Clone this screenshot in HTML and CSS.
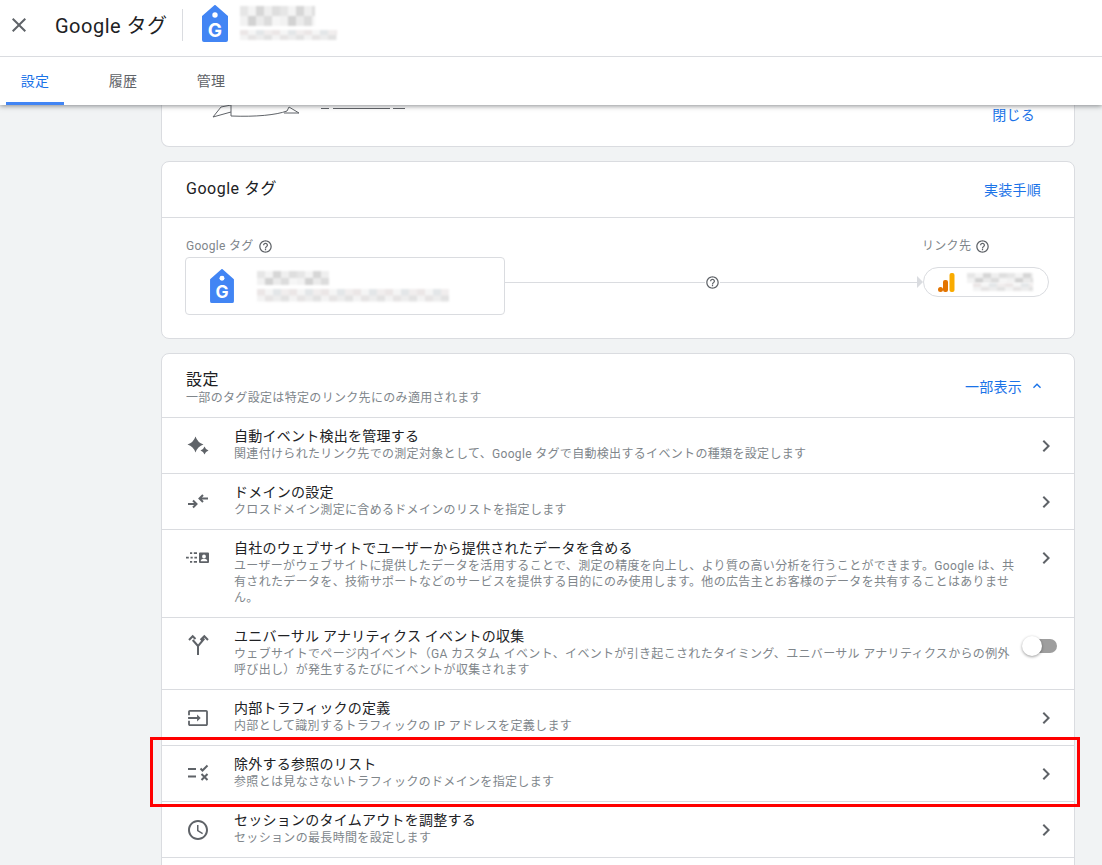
FILE: index.html
```html
<!DOCTYPE html>
<html lang="ja">
<head>
	<meta charset="UTF-8">
	<title>Google タグ</title>
	<link rel="stylesheet" href="styles.css">
</head>
<body>
	<header class="top">
		<div class="top_bar">
			<svg class="close_icon" viewBox="0 0 24 24" width="24" height="24"><path d="M19 6.410 17.590 5 12 10.590 6.410 5 5 6.410 10.590 12 5 17.590 6.410 19 12 13.410 17.590 19 19 17.590 13.410 12z"/></svg>
			<span class="top_title">Google タグ</span>
			<span class="top_divider"></span>
			<svg class="tag_icon top_tag" viewBox="0 0 26 37" width="26" height="37"><path d="M13 1 25 11.500V35a1 1 0 0 1-1 1H2a1 1 0 0 1-1-1V11.500z" fill="#4285f4" stroke="#4285f4" stroke-width="2" stroke-linejoin="round"/><circle cx="13" cy="10" r="2.700" fill="#fff"/><text x="13" y="32" class="tag_g" font-size="19">G</text></svg>
			<div class="blur_group top_group">
				<span class="blur blur_a top_blur1"></span>
				<span class="blur blur_b top_blur2"></span>
			</div>
		</div>
		<nav class="tabs">
			<a class="tab tab_on">設定</a>
			<a class="tab">履歴</a>
			<a class="tab">管理</a>
		</nav>
	</header>

	<main class="content">
		<section class="card card_cut">
			<svg class="sketch" viewBox="0 0 90 14" width="90" height="14"><path d="M1 13 9 3l10-2v11c25 1 45-1 56-5l2-4 10 6H72M19 8 1 13" fill="none" stroke="#5f6368"/></svg>
			<span class="sketch_line"></span>
			<a class="link close_link">閉じる</a>
		</section>

		<section class="card">
			<div class="card_head tag_head">
				<h2 class="card_title">Google タグ</h2>
				<a class="link">実装手順</a>
			</div>
			<div class="tag_body">
				<div class="tag_left">
					<div class="field_label">Google タグ <svg class="help" viewBox="0 0 24 24" width="15" height="15"><path d="M11 18h2v-2h-2v2zm1-16C6.480 2 2 6.480 2 12s4.480 10 10 10 10-4.480 10-10S17.520 2 12 2zm0 18c-4.410 0-8-3.590-8-8s3.590-8 8-8 8 3.590 8 8-3.590 8-8 8zm0-14c-2.210 0-4 1.790-4 4h2c0-1.100.9-2 2-2s2 .9 2 2c0 2-3 1.750-3 5h2c0-2.250 3-2.500 3-5 0-2.210-1.790-4-4-4z"/></svg></div>
					<div class="tag_box">
						<svg class="tag_icon" viewBox="0 0 26 37" width="24" height="34"><path d="M13 1 25 11.500V35a1 1 0 0 1-1 1H2a1 1 0 0 1-1-1V11.500z" fill="#4285f4" stroke="#4285f4" stroke-width="2" stroke-linejoin="round"/><circle cx="13" cy="10" r="2.700" fill="#fff"/><text x="13" y="32" class="tag_g" font-size="19">G</text></svg>
						<div class="blur_group box_blur">
							<span class="blur blur_a box_blur1"></span>
							<span class="blur blur_b box_blur2"></span>
						</div>
					</div>
				</div>
				<div class="connector">
					<span class="conn_line conn_first"></span>
					<svg class="help conn_help" viewBox="0 0 24 24" width="15" height="15"><path d="M11 18h2v-2h-2v2zm1-16C6.480 2 2 6.480 2 12s4.480 10 10 10 10-4.480 10-10S17.520 2 12 2zm0 18c-4.410 0-8-3.590-8-8s3.590-8 8-8 8 3.590 8 8-3.590 8-8 8zm0-14c-2.210 0-4 1.790-4 4h2c0-1.100.9-2 2-2s2 .9 2 2c0 2-3 1.750-3 5h2c0-2.250 3-2.500 3-5 0-2.210-1.790-4-4-4z"/></svg>
					<span class="conn_line"></span>
					<span class="conn_arrow"></span>
				</div>
				<div class="tag_right">
					<div class="field_label">リンク先 <svg class="help" viewBox="0 0 24 24" width="15" height="15"><path d="M11 18h2v-2h-2v2zm1-16C6.480 2 2 6.480 2 12s4.480 10 10 10 10-4.480 10-10S17.520 2 12 2zm0 18c-4.410 0-8-3.590-8-8s3.590-8 8-8 8 3.590 8 8-3.590 8-8 8zm0-14c-2.210 0-4 1.790-4 4h2c0-1.100.9-2 2-2s2 .9 2 2c0 2-3 1.750-3 5h2c0-2.250 3-2.500 3-5 0-2.210-1.790-4-4-4z"/></svg></div>
					<div class="dest_pill">
						<svg viewBox="0 0 17 19" width="17" height="19"><rect x="11.500" y="0" width="5" height="19" rx="2" fill="#f9ab00"/><rect x="5" y="7" width="5" height="12" rx="2" fill="#e37400"/><circle cx="2.500" cy="16.500" r="2.500" fill="#e37400"/></svg>
						<div class="blur_group pill_blur">
							<span class="blur blur_a pill_blur1"></span>
							<span class="blur blur_b pill_blur2"></span>
						</div>
					</div>
				</div>
			</div>
		</section>

		<section class="card">
			<div class="card_head set_head">
				<div class="set_text">
					<h2 class="card_title">設定</h2>
					<p class="row_sub">一部のタグ設定は特定のリンク先にのみ適用されます</p>
				</div>
				<a class="link less_link">一部表示 <svg viewBox="0 0 24 24" width="16" height="16"><path d="M12 8l-6 6 1.410 1.410L12 10.830l4.590 4.580L18 14z" fill="#1a73e8"/></svg></a>
			</div>

			<div class="row">
				<svg class="row_icon" viewBox="0 0 24 24"><path d="M9.500 2.500Q11.500 8.500 17.500 10.500 11.500 12.500 9.500 18.500 7.500 12.500 1.500 10.500 7.500 8.500 9.500 2.500zM18.500 12.500Q19.500 15.500 22.500 16.500 19.500 17.500 18.500 20.500 17.500 17.500 14.500 16.500 17.500 15.500 18.500 12.500z"/></svg>
				<div class="row_text">
					<h3 class="row_title">自動イベント検出を管理する</h3>
					<p class="row_sub">関連付けられたリンク先での測定対象として、Google タグで自動検出するイベントの種類を設定します</p>
				</div>
				<svg class="chevron" viewBox="0 0 24 24"><path d="M10 6 8.590 7.410 13.170 12l-4.580 4.590L10 18l6-6z"/></svg>
			</div>
			<div class="row">
				<svg class="row_icon line_icon" viewBox="0 0 24 24"><path d="M2 14h8.500M7 10.500l3.500 3.500-3.500 3.500M22 8.500h-8.500M17 5l-3.500 3.500L17 12"/></svg>
				<div class="row_text">
					<h3 class="row_title">ドメインの設定</h3>
					<p class="row_sub">クロスドメイン測定に含めるドメインのリストを指定します</p>
				</div>
				<svg class="chevron" viewBox="0 0 24 24"><path d="M10 6 8.590 7.410 13.170 12l-4.580 4.590L10 18l6-6z"/></svg>
			</div>
			<div class="row">
				<svg class="row_icon" viewBox="0 0 24 24"><path d="M4 6.300h2.200V8H4zM7.800 6.300H11V8H7.800zM0 10.700h2.800v1.700H0zM4.500 10.700h2.200v1.700H4.500zM8.400 10.700H11v1.700H8.400zM4 15h2.200v1.700H4zM7.800 15H11v1.700H7.800zM14 6.500h8a1 1 0 0 1 1 1v8.500a1 1 0 0 1-1 1h-8a1 1 0 0 1-1-1V7.500a1 1 0 0 1 1-1zm4 2a1.900 1.900 0 1 0 0 3.800 1.900 1.900 0 0 0 0-3.800zM14.800 15.200h6.400v-.8c0-1-2-1.600-3.200-1.600s-3.200.6-3.200 1.600z"/></svg>
				<div class="row_text">
					<h3 class="row_title">自社のウェブサイトでユーザーから提供されたデータを含める</h3>
					<p class="row_sub">ユーザーがウェブサイトに提供したデータを活用することで、測定の精度を向上し、より質の高い分析を行うことができます。Google は、共<br>有されたデータを、技術サポートなどのサービスを提供する目的にのみ使用します。他の広告主とお客様のデータを共有することはありませ<br>ん。</p>
				</div>
				<svg class="chevron" viewBox="0 0 24 24"><path d="M10 6 8.590 7.410 13.170 12l-4.580 4.590L10 18l6-6z"/></svg>
			</div>
			<div class="row">
				<svg class="row_icon line_icon" viewBox="0 0 24 24"><path d="M12 21v-9L18.300 4.500M14.500 6l3.800-3.800L22 6M12 12 6.700 6M3 6l3.700-3.800L9.500 5"/></svg>
				<div class="row_text">
					<h3 class="row_title">ユニバーサル アナリティクス イベントの収集</h3>
					<p class="row_sub">ウェブサイトでページ内イベント（GA カスタム イベント、イベントが引き起こされたタイミング、ユニバーサル アナリティクスからの例外<br>呼び出し）が発生するたびにイベントが収集されます</p>
				</div>
				<span class="toggle"><span class="toggle_knob"></span></span>
			</div>
			<div class="row">
				<svg class="row_icon" viewBox="0 0 24 24"><path transform="translate(1.200 1.200) scale(.9)" d="M21 3.010H3c-1.100 0-2 .9-2 2V9h2V4.990h18v14.030H3V15H1v4.010c0 1.100.9 1.980 2 1.980h18c1.100 0 2-.88 2-1.980v-14c0-1.110-.9-2-2-2zM11 16l4-4-4-4v3H1v2h10v3z"/></svg>
				<div class="row_text">
					<h3 class="row_title">内部トラフィックの定義</h3>
					<p class="row_sub">内部として識別するトラフィックの IP アドレスを定義します</p>
				</div>
				<svg class="chevron" viewBox="0 0 24 24"><path d="M10 6 8.590 7.410 13.170 12l-4.580 4.590L10 18l6-6z"/></svg>
			</div>
			<div class="row">
				<svg class="row_icon line_icon" viewBox="0 0 24 24"><path d="M2 7h8M2 14.500h8M14.500 6.500l2 2 5-5M15.500 12l6 6M21.500 12l-6 6"/></svg>
				<div class="row_text">
					<h3 class="row_title">除外する参照のリスト</h3>
					<p class="row_sub">参照とは見なさないトラフィックのドメインを指定します</p>
				</div>
				<svg class="chevron" viewBox="0 0 24 24"><path d="M10 6 8.590 7.410 13.170 12l-4.580 4.590L10 18l6-6z"/></svg>
			</div>
			<div class="row">
				<svg class="row_icon" viewBox="0 0 24 24"><path d="M11.990 2C6.470 2 2 6.480 2 12s4.470 10 9.990 10C17.520 22 22 17.520 22 12S17.520 2 11.990 2zM12 20c-4.420 0-8-3.580-8-8s3.580-8 8-8 8 3.580 8 8-3.580 8-8 8zm.5-13H11v6l5.250 3.150.75-1.230-4.500-2.670z"/></svg>
				<div class="row_text">
					<h3 class="row_title">セッションのタイムアウトを調整する</h3>
					<p class="row_sub">セッションの最長時間を設定します</p>
				</div>
				<svg class="chevron" viewBox="0 0 24 24"><path d="M10 6 8.590 7.410 13.170 12l-4.580 4.590L10 18l6-6z"/></svg>
			</div>
			<div class="row"></div>
		</section>
	</main>

	<div class="red_box"></div>
</body>
</html>
```

FILE: styles.css
```css
*{
	margin: 0;
	padding: 0;
	box-sizing: border-box;
}
html,body{
	height: 865px;
	overflow: hidden;
}
body{
	position: relative;
	background-color: #f1f3f4;
	color: #202124;
	font-family: Roboto, "Noto Sans CJK JP", sans-serif;
	display: flex;
	flex-direction: column;
}
h2,h3{
	font-weight: 400;
}

/* top bar */
.top{
	position: relative;
	z-index: 2;
	background-color: #fff;
	box-shadow: 0 1px 5px rgba(60,64,67,.6);
	flex: none;
}
.top_bar{
	height: 57px;
	border-bottom: 1px solid #dadce0;
	display: flex;
	align-items: center;
	padding-bottom: 7px;
}
.close_icon{
	fill: #5f6368;
	margin-left: 7px;
	flex: none;
}
.top_title{
	font-size: 20px;
	letter-spacing: .5px;
	margin-left: 24px;
	width: 111px;
	white-space: nowrap;
}
.top_divider{
	width: 1px;
	height: 32px;
	background-color: #dadce0;
	margin-left: 16px;
}
.top_tag{
	margin-left: 19px;
	margin-top: -3px;
	flex: none;
}
.tag_g{
	fill: #fff;
	font-family: Inter, Roboto, sans-serif;
	font-weight: 700;
	text-anchor: middle;
}
.blur_group{
	display: flex;
	flex-direction: column;
}
.blur{
	display: block;
	filter: blur(.8px);
}
/* pixelated name blocks: two rows of hard colour stops */
.blur_a{
	background:
		repeating-linear-gradient(90deg, #e6e6e6 0 8px, #f4f4f4 8px 16px, #d6d6d6 16px 24px, #efefef 24px 32px, #dedede 32px 40px) top / 100% 50% no-repeat,
		repeating-linear-gradient(90deg, #f2f2f2 0 8px, #d2d2d2 8px 16px, #ebebeb 16px 24px, #dcdcdc 24px 32px, #f6f6f6 32px 40px) bottom / 100% 50% no-repeat;
}
.blur_b{
	background:
		repeating-linear-gradient(90deg, #ebe6e6 0 8px, #f5f5f5 8px 16px, #e3e6e8 16px 24px, #f1eeee 24px 32px) top / 100% 50% no-repeat,
		repeating-linear-gradient(90deg, #f3f3f3 0 8px, #e6e4e4 8px 16px, #ededed 16px 24px, #e2e2e2 24px 32px) bottom / 100% 50% no-repeat;
}
.top_group{
	margin-left: 12px;
	margin-top: -4px;
}
.top_blur1{ width: 75px; height: 20px; }
.top_blur2{ width: 97px; height: 10px; margin-top: 4px; }
.tabs{
	height: 48px;
	display: flex;
	gap: 30px;
	padding-left: 6px;
}
.tab{
	width: 58px;
	text-align: center;
	font-size: 14px;
	line-height: 48px;
	letter-spacing: .25px;
	color: #5f6368;
}
.tab_on{
	color: #1a73e8;
	border-bottom: 3px solid #4285f4;
	border-radius: 2px 2px 0 0;
}

/* cards */
.content{
	flex: 1;
	min-height: 0;
	overflow: hidden;
	width: 914px;
	margin-left: 161px;
	display: flex;
	flex-direction: column;
	gap: 14px;
}
.card{
	background-color: #fff;
	border: 1px solid #dadce0;
	border-radius: 8px;
	flex: none;
}
.card_cut{
	height: 42px;
	border-top: none;
	border-radius: 0 0 8px 8px;
	display: flex;
	align-items: flex-start;
	padding-left: 50px;
	padding-right: 39px;
}
.sketch{
	margin-top: -1px;
	flex: none;
}
.sketch_line{
	width: 84px;
	height: 1px;
	margin-top: 3px;
	margin-left: 19px;
	background: linear-gradient(90deg, #5f6368 0 8px, transparent 8px 12px, #5f6368 12px 69px, transparent 69px 72px, #5f6368 72px);
}
.close_link{
	margin-left: auto;
	margin-top: -1px;
}
.link{
	color: #1a73e8;
	font-size: 14px;
	letter-spacing: .25px;
	white-space: nowrap;
}
.card_head{
	display: flex;
	justify-content: space-between;
	align-items: center;
	border-bottom: 1px solid #dadce0;
	padding: 0 33px 0 24px;
}
.tag_head{
	height: 56px;
	padding-bottom: 2px;
}
.set_head{
	height: 64px;
	padding-right: 29px;
}
.set_text{
	padding-top: 4px;
}
.card_title{
	font-size: 16px;
	line-height: 20px;
	letter-spacing: .5px;
}

/* tag diagram */
.tag_body{
	height: 120px;
	display: flex;
	align-items: flex-start;
	padding: 19px 25px 0 23px;
}
.tag_left{
	width: 320px;
	flex: none;
}
.field_label{
	height: 18px;
	margin-bottom: 2px;
	font-size: 12px;
	line-height: 16px;
	letter-spacing: .3px;
	color: #80868b;
	display: flex;
	align-items: center;
	gap: 4px;
	padding-left: 1px;
}
.help{
	fill: #5f6368;
	flex: none;
}
.tag_box{
	height: 58px;
	border: 1px solid #dadce0;
	border-radius: 4px;
	display: flex;
	align-items: center;
	padding-left: 24px;
}
.box_blur{
	margin-left: 23px;
}
.box_blur1{ width: 72px; height: 14px; }
.box_blur2{ width: 192px; height: 13px; margin-top: 4px; }
.connector{
	flex: 1;
	height: 30px;
	margin-top: 30px;
	display: flex;
	align-items: center;
}
.conn_line{
	flex: 1;
	height: 1px;
	background-color: #dadce0;
}
.conn_first{
	flex: none;
	width: 200px;
}
.conn_arrow{
	width: 0;
	height: 0;
	border-left: 6px solid #dadce0;
	border-top: 6px solid transparent;
	border-bottom: 6px solid transparent;
}
.tag_right{
	width: 126px;
	flex: none;
}
.tag_right .field_label{
	padding-left: 0;
	margin-left: -1px;
	margin-bottom: 12px;
}
.dest_pill{
	height: 30px;
	border: 1px solid #dadce0;
	border-radius: 15px;
	display: flex;
	align-items: center;
	padding-left: 14px;
}
.pill_blur{
	margin-left: 12px;
}
.pill_blur1{ width: 66px; height: 10px; }
.pill_blur2{ width: 60px; height: 8px; margin-left: 6px; }

/* settings rows */
.row{
	display: flex;
	align-items: flex-start;
	border-bottom: 1px solid #dadce0;
	padding: 9px 16px 11px 24px;
	min-height: 56px;
}
.row_icon{
	width: 24px;
	height: 24px;
	margin-top: 7px;
	margin-right: 24px;
	fill: #5f6368;
	flex: none;
}
.line_icon{
	fill: none;
	stroke: #5f6368;
	stroke-width: 2;
}
.row_text{
	flex: 1;
	min-width: 0;
}
.row_title{
	font-size: 14px;
	line-height: 19px;
	letter-spacing: .25px;
}
.row_sub{
	font-size: 12px;
	line-height: 16px;
	letter-spacing: .33px;
	color: #80868b;
	white-space: nowrap;
}
.chevron{
	width: 24px;
	height: 24px;
	margin-top: 7px;
	fill: #5f6368;
	flex: none;
}
.less_link{
	display: flex;
	align-items: center;
	gap: 7px;
}
.toggle{
	position: relative;
	width: 28px;
	height: 14px;
	margin-top: 12px;
	margin-left: -17px;
	margin-right: 1px;
	border-radius: 7px;
	background-color: #9e9e9e;
	flex: none;
}
.toggle_knob{
	position: absolute;
	left: -7px;
	top: -3px;
	width: 20px;
	height: 20px;
	border-radius: 50%;
	background-color: #fff;
	box-shadow: 0 1px 3px rgba(0,0,0,.4);
}

/* annotation over the screenshot */
.red_box{
	position: absolute;
	left: 150px;
	top: 737px;
	width: 930px;
	height: 70px;
	border: 3px solid #f00;
	z-index: 1;
}
```
